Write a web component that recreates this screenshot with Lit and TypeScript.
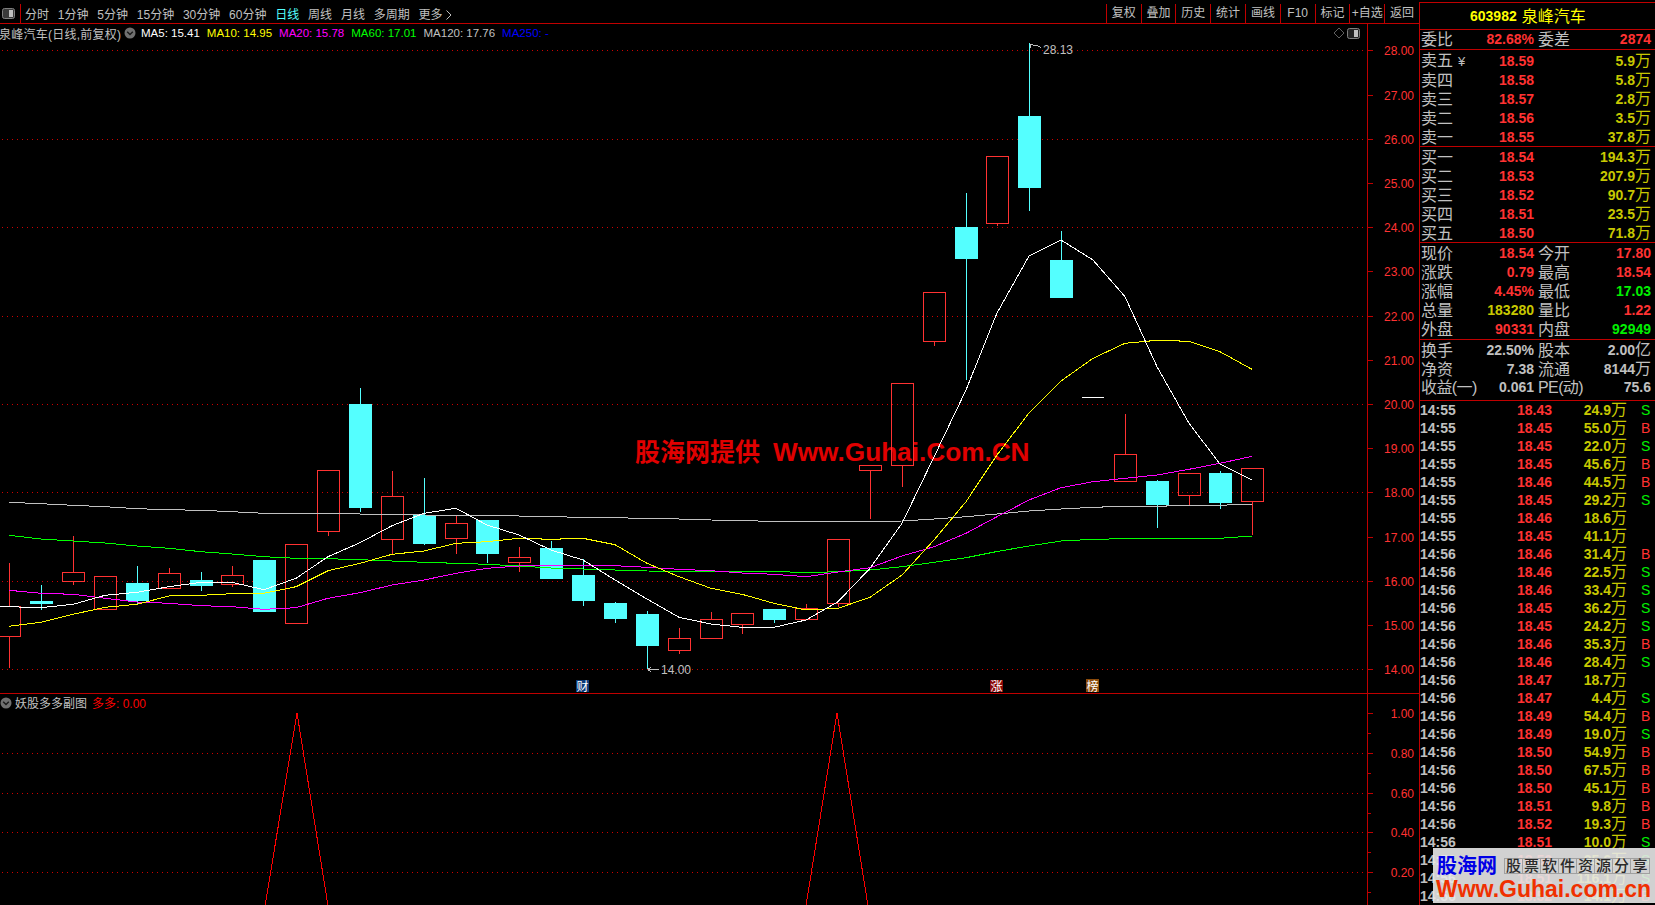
import { LitElement, html, css, svg } from "lit";
import { customElement } from "lit/decorators.js";

const X = (i: number) => Math.round(9.4 + 31.87 * i);
const Y = (p: number) => 50.3 + (28 - p) * 44.21;

// [index, body top, body bottom, wick top (or 0), wick bottom (or 0), kind]
const CANDLES: [number, number, number, number, number, string][] = [
  [0, 606, 637, 563, 668, "r"], [1, 601, 604, 585, 610, "c"], [2, 572, 582, 536, 585, "r"], [3, 576, 610, 0, 0, "r"],
  [4, 583, 601, 566, 604, "c"], [5, 573, 589, 568, 589, "r"], [6, 580, 586, 572, 591, "c"], [7, 575, 585, 566, 587, "r"],
  [8, 560, 612, 0, 0, "c"], [9, 544, 624, 0, 0, "r"], [10, 470, 532, 0, 536, "r"], [11, 404, 508, 388, 512, "c"],
  [12, 496, 540, 471, 554, "r"], [13, 515, 544, 478, 545, "c"], [14, 523, 539, 516, 554, "r"], [15, 520, 554, 0, 563, "c"],
  [16, 557, 563, 547, 572, "r"], [17, 548, 579, 541, 0, "c"], [18, 575, 601, 559, 606, "c"], [19, 603, 619, 602, 623, "c"],
  [20, 614, 646, 611, 669, "c"], [21, 638, 651, 628, 654, "r"], [22, 619, 639, 612, 0, "r"], [23, 613, 625, 0, 634, "r"],
  [24, 609, 620, 0, 623, "c"], [25, 608, 620, 604, 0, "r"], [26, 539, 604, 0, 607, "r"], [27, 465, 471, 0, 519, "r"],
  [28, 383, 466, 0, 487, "r"], [29, 292, 342, 0, 346, "r"], [30, 227, 259, 193, 380, "c"], [31, 156, 224, 0, 226, "r"],
  [32, 116, 188, 43, 211, "c"], [33, 260, 298, 231, 0, "c"], [35, 454, 482, 414, 0, "r"], [36, 481, 505, 480, 528, "c"],
  [37, 473, 496, 0, 505, "r"], [38, 473, 503, 471, 509, "c"], [39, 468, 502, 0, 535, "r"],
];

const MA5 = [606.7,607.7,604.3,595.3,592.3,586.7,582.3,582.3,589.7,578.3,556.7,542.7,525.7,513.3,508.3,525,535,550,560,580,599,617.3,624,627.3,627.3,620,601.7,568.3,523.3,457,390,313,256,240,260,296.7,366.7,423.3,464,480];
const MA10 = [626.3,622.3,614.3,607.3,604.3,596,595.3,593.7,593.3,586.7,570.7,563.3,554.3,551,543.3,541.7,538.3,539.3,538.3,544.7,563.3,576.7,588.3,594.3,603.3,610,608.3,597.3,575,540,501.7,455,413,381,358.3,343.3,340.3,341.3,351.7,369.3];
const MA20 = [590.3,593.3,594.3,598.3,602,603.3,605.7,606.7,609.3,607.7,598.3,592.7,585,580,573.3,568.3,566,565.7,565.7,565.7,567.3,569.3,570.7,573,574.3,576.7,572,567.7,556,546.7,533.3,516.7,500,487.7,481.7,478.3,475,469.3,463.3,456.3];
const MA60 = [535.3,539,541,543,546,548.3,551.7,554,556.7,558.3,558.7,559.7,561,562.3,563.3,564.3,566,568,569,570,571,571.3,571.3,571.3,571.3,572.7,571.7,570,566.7,562.3,557.7,551.5,546,541,539.3,538.7,538.7,538.7,538.3,536];
const MA120 = [502.3,503.7,505.3,506.7,508.7,509.7,510.3,511.7,513.3,513.5,513.7,514,514.5,515,515.3,515.7,516,516.7,517.3,517.8,518.3,519,520,520.7,521.3,521.5,521.7,521.5,521,519,516.7,514,511,509,507.3,506.3,506.3,505.3,505.3,504];

const pts = (a: number[]) => a.map((y, i) => `${X(i)},${y}`).join(" ");

const TABS_L = ["分时", "1分钟", "5分钟", "15分钟", "30分钟", "60分钟", "日线", "周线", "月线", "多周期", "更多"];
const TABS_R = ["复权", "叠加", "历史", "统计", "画线", "F10", "标记", "+自选", "返回"];

const LEGEND: [string, string][] = [
  ["MA5: 15.41", "w"], ["MA10: 14.95", "y"], ["MA20: 15.78", "m"], ["MA60: 17.01", "g"], ["MA120: 17.76", "s"], ["MA250: -", "b"],
];

const ASK: [string, string, string][] = [["卖五", "18.59", "5.9"], ["卖四", "18.58", "5.8"], ["卖三", "18.57", "2.8"], ["卖二", "18.56", "3.5"], ["卖一", "18.55", "37.8"]];
const BID: [string, string, string][] = [["买一", "18.54", "194.3"], ["买二", "18.53", "207.9"], ["买三", "18.52", "90.7"], ["买四", "18.51", "23.5"], ["买五", "18.50", "71.8"]];

const STATS: [string, string, string, string, string, string][] = [
  ["现价", "18.54", "red", "今开", "17.80", "red"],
  ["涨跌", "0.79", "red", "最高", "18.54", "red"],
  ["涨幅", "4.45%", "red", "最低", "17.03", "grn"],
  ["总量", "183280", "vol", "量比", "1.22", "red"],
  ["外盘", "90331", "red", "内盘", "92949", "grn"],
];

const TICKS: [string, string, string, string][] = [
  ["14:55","18.43","24.9","S"],["14:55","18.45","55.0","B"],["14:55","18.45","22.0","S"],["14:55","18.45","45.6","B"],
  ["14:55","18.46","44.5","B"],["14:55","18.45","29.2","S"],["14:55","18.46","18.6",""],["14:55","18.45","41.1",""],
  ["14:56","18.46","31.4","B"],["14:56","18.46","22.5","S"],["14:56","18.46","33.4","S"],["14:56","18.45","36.2","S"],
  ["14:56","18.45","24.2","S"],["14:56","18.46","35.3","B"],["14:56","18.46","28.4","S"],["14:56","18.47","18.7",""],
  ["14:56","18.47","4.4","S"],["14:56","18.49","54.4","B"],["14:56","18.49","19.0","S"],["14:56","18.50","54.9","B"],
  ["14:56","18.50","67.5","B"],["14:56","18.50","45.1","B"],["14:56","18.51","9.8","B"],["14:56","18.52","19.3","B"],
  ["14:56","18.51","10.0","S"],["14:56","18.50","25.6","S"],["14:56","18.51","116.1","S"],["14:56","18.52","14.1","B"],
];

const chevron = () => html`<svg class="chev" width="12" height="12" viewBox="0 0 12 12"><circle cx="6" cy="6" r="5.5" fill="#707070"/><path d="M3.2 4.8 6 7.6 8.8 4.8" fill="none" stroke="#1a1a1a" stroke-width="1.4"/></svg>`;

@customElement("app-root")
export class AppRoot extends LitElement {
  static styles = css`
    :host {
      display: flex;
      width: 1655px;
      height: 905px;
      overflow: hidden;
      background: #000;
      color: #c0c0c0;
      font-family: "Liberation Sans", "Noto Sans CJK SC", sans-serif;
      font-size: 12px;
      position: relative;
    }
    .left { width: 1419px; flex: none; display: flex; flex-direction: column; position: relative; }
    .toolbar { height: 23px; flex: none; display: flex; align-items: stretch; border-bottom: 1px solid #c00000; }
    .tb-icon { width: 20px; flex: none; display: flex; align-items: center; padding: 3px 0 0 2px; box-sizing: border-box; }
    .tabs { flex: 1; display: flex; align-items: center; gap: 8.8px; padding: 3px 0 0 4px; border-left: 1px solid #c00000; margin-top: 4px; height: 19px; box-sizing: border-box; line-height: 14px; }
    .tabs .on { color: #54ffff; }
    .more { margin-left: -5px; }
    .btns { display: flex; margin-top: 4px; height: 19px; }
    .btn { width: 34.8px; box-sizing: border-box; border-left: 1px solid #c00000; text-align: center; line-height: 18px; }

    .main { flex: none; width: 1419px; height: 669px; display: block; }
    .sub { flex: none; width: 1419px; height: 212px; display: block; }
    svg text { font-family: "Liberation Sans", "Noto Sans CJK SC", sans-serif; }
    .axis-t { font-size: 12px; fill: #ff3232; text-anchor: end; }
    .note { font-size: 12px; fill: #c0c0c0; }
    .mark { font-size: 12px; fill: #fff; text-anchor: middle; }
    .brand { font-size: 26.2px; font-weight: 700; fill: #e00000; }
    .brand-c { font-size: 25px; }

    .legend { position: absolute; left: 0; top: 24px; height: 18px; display: flex; align-items: center; white-space: nowrap; }
    .legend .name { width: 120px; margin-right: 5px; margin-left: -1px; letter-spacing: 0.25px; }
    .legend .chev { margin-right: 4px; flex: none; }
    .vals { display: flex; gap: 7px; font-size: 11.5px; margin-left: 1px; }
    .w { color: #fff; } .y { color: #ffff00; } .m { color: #ff00ff; } .g { color: #00ff00; } .s { color: #c0c0c0; } .b { color: #0000ff; }
    .chart-icons { position: absolute; left: 1333px; top: 27px; display: flex; align-items: center; gap: 2px; }

    .sublegend { position: absolute; left: 0; top: 694px; height: 17px; display: flex; align-items: center; white-space: nowrap; }
    .sublegend .chev { margin-right: 3px; flex: none; }
    .sublegend .red-t { margin-left: 5px; color: #f00; }

    .panel {
      width: 236px; flex: none; box-sizing: border-box; border-left: 1px solid #c00000;
      border-top: 1px solid #c00000; margin-top: 2px; display: flex; flex-direction: column;
      font-size: 14px; line-height: 19px; font-weight: 700;
    }
    .head { height: 26px; border-bottom: 1px solid #c00000; display: flex; align-items: center; gap: 5px; color: #ffff00; padding-left: 50px; }
    .cjk { font-size: 16px; font-weight: 400; }
    .sec { border-bottom: 1px solid #c00000; padding-right: 4px; padding-left: 1px; flex: none; }
    .ratio { height: 19px; }
    .book { padding-top: 1px; }
    .stats { padding-top: 1px; padding-bottom: 0; }
    .fund { padding-bottom: 3px; }
    .row { height: 19px; display: grid; grid-template-columns: 113px 1fr; column-gap: 4px; }
    .half { display: flex; justify-content: space-between; align-items: center; white-space: nowrap; padding-bottom: 1px; box-sizing: border-box; }
    .lab { font-size: 16px; font-weight: 400; color: #c0c0c0; }
    .tight { letter-spacing: -0.6px; }
    .yen { font-size: 13px; margin-left: 5px; }
    .red { color: #ff3232; } .grn { color: #00f000; } .vol { color: #c8c800; } .gry { color: #c0c0c0; }
    .end { justify-content: flex-end; }
    .ticks { flex: 1; overflow: hidden; line-height: 18px; }
    .tick { height: 18px; display: grid; grid-template-columns: 60px 72px 75px 1fr; align-items: center; white-space: nowrap; }
    .tick > :nth-child(2), .tick > :nth-child(3) { text-align: right; }
    .bs { padding-left: 14px; font-weight: 400; }

    .stamp {
      position: absolute; left: 1433px; top: 848px; width: 222px; height: 55px; box-sizing: border-box;
      background: rgba(232, 232, 232, 0.9); padding: 7px 7px 0 3px; display: flex; flex-direction: column; gap: 2px;
    }
    .stamp-top { display: flex; align-items: center; gap: 7px; height: 22px; padding-left: 1px; }
    .stamp-name { color: #0000e6; font-size: 20px; font-weight: 700; line-height: 20px; white-space: nowrap; }
    .cells { display: grid; grid-template-columns: repeat(8, 18px); height: 16px; border: 1px solid #a0a0a0; box-sizing: border-box; }
    .cells span { color: #2a2a2a; font-size: 15px; line-height: 14px; text-align: center; border-right: 1px solid #a0a0a0; font-weight: 500; }
    .cells span:last-child { border-right: 0; }
    .stamp-url { color: #f03000; font-size: 23px; font-weight: 700; line-height: 21px; white-space: nowrap; }
  `;

  private grid(y: number) {
    const yy = Math.round(y) + 0.5;
    return svg`<line x1="2" x2="1364" y1=${yy} y2=${yy} stroke="#d00000" stroke-dasharray="1 4"/>`;
  }

  private candle(c: [number, number, number, number, number, string]) {
    const [i, top, bot, hi, lo, kind] = c;
    const x = X(i);
    const col = kind === "r" ? "#ff3232" : "#54ffff";
    return svg`
      ${hi ? svg`<line x1=${x + 0.5} x2=${x + 0.5} y1=${hi} y2=${top} stroke=${col}/>` : ""}
      ${lo ? svg`<line x1=${x + 0.5} x2=${x + 0.5} y1=${bot} y2=${lo} stroke=${col}/>` : ""}
      ${kind === "r"
        ? svg`<rect x=${x - 10.5} y=${top + 0.5} width="22" height=${bot - top - 1} fill="none" stroke=${col}/>`
        : svg`<rect x=${x - 11} y=${top} width="23" height=${bot - top} fill=${col}/>`}
    `;
  }

  private mainChart() {
    const majors = [28, 27, 26, 25, 24, 23, 22, 21, 20, 19, 18, 17, 16, 15, 14];
    return html`<svg class="main" viewBox="0 24 1419 669" shape-rendering="crispEdges">
      ${[28, 26, 24, 22, 20, 18, 16, 14].map((p) => this.grid(Y(p)))}
      <g shape-rendering="auto">
        <text x="635" y="461" class="brand brand-c">股海网提供</text>
        <text x="773" y="461" class="brand">Www.Guhai.Com.CN</text>
      </g>
      ${CANDLES.map((c) => this.candle(c))}
      <line x1="1082" x2="1104" y1="397.5" y2="397.5" stroke="#fff"/>
      <line x1="0" x2="9" y1="606.5" y2="606.5" stroke="#fff"/>
      <polyline points=${pts(MA120)} fill="none" stroke="#c0c0c0"/>
      <polyline points=${pts(MA60)} fill="none" stroke="#00ff00"/>
      <polyline points=${pts(MA20)} fill="none" stroke="#ff00ff"/>
      <polyline points=${pts(MA10)} fill="none" stroke="#ffff00"/>
      <polyline points=${pts(MA5)} fill="none" stroke="#ffffff"/>
      <path d="M1030 48V44H1033M1031 44L1035 46L1037 45.5L1041 47.5" fill="none" stroke="#c0c0c0"/>
      <text x="1043" y="54" class="note" shape-rendering="auto">28.13</text>
      <path d="M648 669.5H659M648 669.5L651 667M648 669.5L651 672" fill="none" stroke="#c0c0c0"/>
      <text x="661" y="674" class="note" shape-rendering="auto">14.00</text>
      <rect x="576" y="680" width="13" height="12" fill="#0c3a78"/>
      <text x="582.5" y="690.5" class="mark">财</text>
      <rect x="990" y="680" width="13" height="12" fill="#8a0808"/>
      <text x="996.5" y="690.5" class="mark">涨</text>
      <rect x="1086" y="679" width="13" height="13" fill="#8a4a0a"/>
      <text x="1092.5" y="690.5" class="mark">榜</text>
      <line x1="1367.5" x2="1367.5" y1="24" y2="693" stroke="#c00000"/>
      ${majors.map((p) => {
        const y = Math.round(Y(p)) + 0.5;
        return svg`
          <line x1="1367" x2="1373" y1=${y} y2=${y} stroke="#c00000"/>
          <text x="1414" y=${y + 4} class="axis-t" shape-rendering="auto">${p}.00</text>`;
      })}
    </svg>`;
  }

  private subChart() {
    const ticks: [string, number][] = [["1.00", 713], ["0.80", 753], ["0.60", 793], ["0.40", 832], ["0.20", 872]];
    return html`<svg class="sub" viewBox="0 693 1419 212" shape-rendering="crispEdges">
      <line x1="0" x2="1419" y1="693.5" y2="693.5" stroke="#c00000"/>
      ${[753, 793, 832, 872].map((y) => this.grid(y))}
      <polyline points="264,912 297,713 329,912" fill="none" stroke="#ff0000"/>
      <polyline points="805,912 837,713 869,912" fill="none" stroke="#ff0000"/>
      <line x1="1367.5" x2="1367.5" y1="693" y2="905" stroke="#c00000"/>
      ${ticks.map(([t, y]) => svg`
        <line x1="1367" x2="1373" y1=${y + 0.5} y2=${y + 0.5} stroke="#c00000"/>
        <line x1="1367" x2="1371" y1=${y + 20.5} y2=${y + 20.5} stroke="#c00000"/>
        <text x="1414" y=${y + 4.5} class="axis-t" shape-rendering="auto">${t}</text>`)}
    </svg>`;
  }

  private bookRow([name, price, vol]: [string, string, string], yen = false) {
    return html`<div class="row">
      <div class="half"><span class="lab">${name}${yen ? html`<span class="yen">¥</span>` : ""}</span><span class="red">${price}</span></div>
      <div class="half end"><span class="vol">${vol}<span class="cjk">万</span></span></div>
    </div>`;
  }

  render() {
    return html`
      <div class="left">
        <div class="toolbar">
          <div class="tb-icon">
            <svg width="13" height="11" viewBox="0 0 13 11"><rect x="0.5" y="0.5" width="12" height="10" rx="2" fill="#3a3a3a" stroke="#808080"/><rect x="7" y="2" width="4" height="7" fill="#c0c0c0"/></svg>
          </div>
          <div class="tabs">
            ${TABS_L.map((t) => html`<span class=${t === "日线" ? "on" : ""}>${t}</span>`)}
            <svg class="more" width="6" height="10" viewBox="0 0 6 10"><path d="M0.5 0.5 5 5 0.5 9.5" fill="none" stroke="#c0c0c0"/></svg>
          </div>
          <div class="btns">${TABS_R.map((t) => html`<div class="btn">${t}</div>`)}</div>
        </div>
        ${this.mainChart()}
        ${this.subChart()}
        <div class="legend">
          <span class="name">泉峰汽车(日线,前复权)</span>
          ${chevron()}
          <div class="vals">${LEGEND.map(([t, c]) => html`<span class=${c}>${t}</span>`)}</div>
        </div>
        <div class="chart-icons">
          <svg width="12" height="12" viewBox="0 0 12 12"><path d="M6 1 11 6 6 11 1 6Z" fill="none" stroke="#606060"/></svg>
          <svg width="13" height="11" viewBox="0 0 13 11"><rect x="0.5" y="0.5" width="12" height="10" rx="2" fill="#222" stroke="#808080"/><rect x="7" y="2" width="4" height="7" fill="#c0c0c0"/></svg>
        </div>
        <div class="sublegend">
          ${chevron()}
          <span>妖股多多副图</span>
          <span class="red-t">多多: 0.00</span>
        </div>
      </div>

      <div class="panel">
        <div class="head"><span>603982</span><span class="cjk">泉峰汽车</span></div>
        <div class="sec ratio">
          <div class="row">
            <div class="half"><span class="lab">委比</span><span class="red">82.68%</span></div>
            <div class="half"><span class="lab">委差</span><span class="red">2874</span></div>
          </div>
        </div>
        <div class="sec book">${ASK.map((r, i) => this.bookRow(r, i === 0))}</div>
        <div class="sec">${BID.map((r) => this.bookRow(r))}</div>
        <div class="sec stats">
          ${STATS.map(([a, b, c, d, e, f]) => html`<div class="row">
            <div class="half"><span class="lab">${a}</span><span class=${c}>${b}</span></div>
            <div class="half"><span class="lab">${d}</span><span class=${f}>${e}</span></div>
          </div>`)}
        </div>
        <div class="sec fund">
          <div class="row">
            <div class="half"><span class="lab">换手</span><span class="gry">22.50%</span></div>
            <div class="half"><span class="lab">股本</span><span class="gry">2.00<span class="cjk">亿</span></span></div>
          </div>
          <div class="row">
            <div class="half"><span class="lab">净资</span><span class="gry">7.38</span></div>
            <div class="half"><span class="lab">流通</span><span class="gry">8144<span class="cjk">万</span></span></div>
          </div>
          <div class="row">
            <div class="half"><span class="lab tight">收益(一)</span><span class="gry">0.061</span></div>
            <div class="half"><span class="lab tight">PE(动)</span><span class="gry">75.6</span></div>
          </div>
        </div>
        <div class="ticks">
          ${TICKS.map(([t, p, v, k]) => html`<div class="tick">
            <span class="gry">${t}</span>
            <span class="red">${p}</span>
            <span class="vol">${v}<span class="cjk">万</span></span>
            <span class="bs ${k === "S" ? "grn" : "red"}">${k}</span>
          </div>`)}
        </div>
      </div>

      <div class="stamp">
        <div class="stamp-top">
          <span class="stamp-name">股海网</span>
          <div class="cells">${[..."股票软件资源分享"].map((c) => html`<span>${c}</span>`)}</div>
        </div>
        <div class="stamp-url">Www.Guhai.com.cn</div>
      </div>
    `;
  }
}
